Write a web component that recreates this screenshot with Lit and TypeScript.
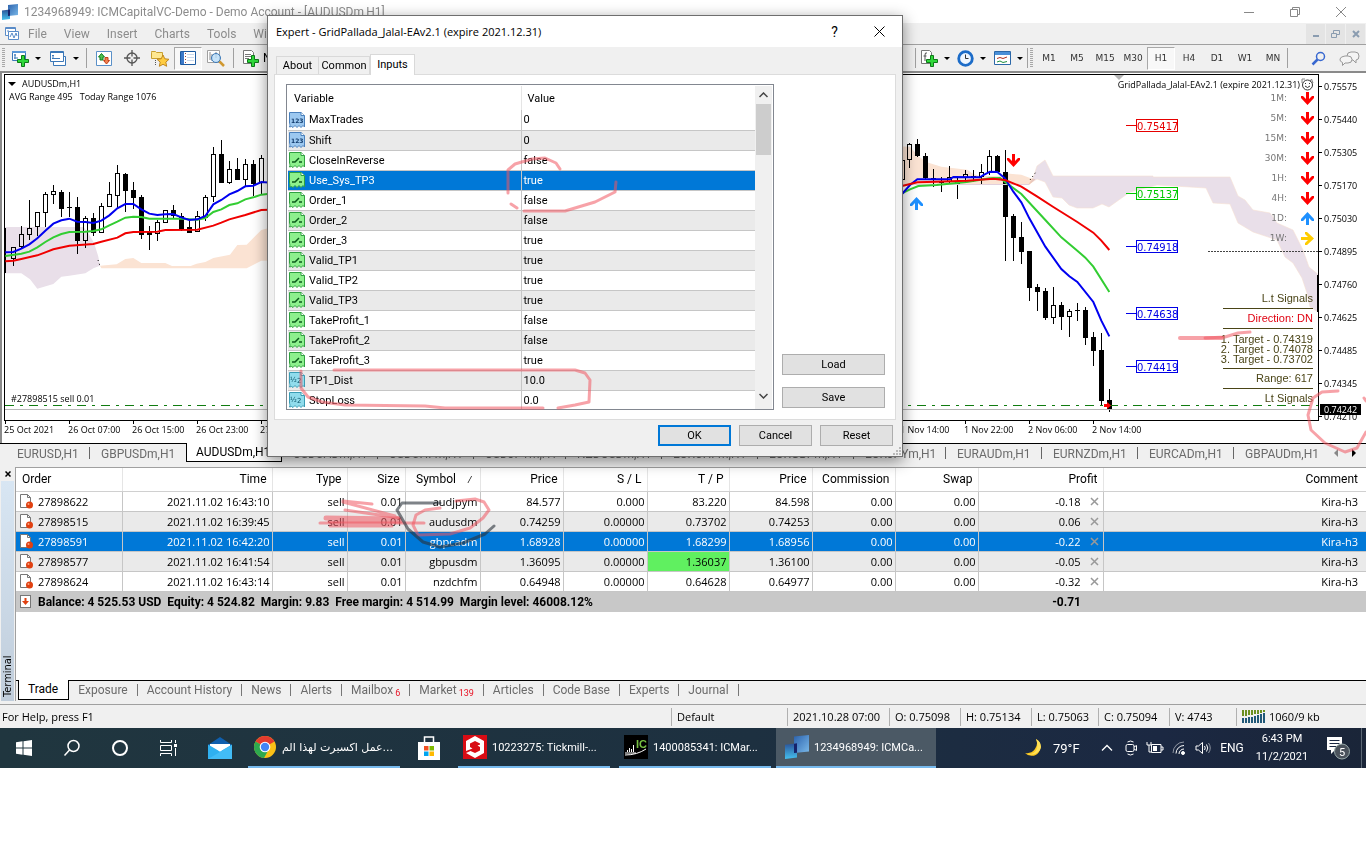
import { LitElement, html, svg, css } from "lit";
import { customElement, state } from "lit/decorators.js";
import { classMap } from "lit/directives/class-map.js";

const reset = css`
  * { box-sizing: border-box; }
  button { font: inherit; color: inherit; background: none; border: 0; padding: 0; margin: 0; border-radius: 0; }
  ul { list-style: none; margin: 0; padding: 0; }
  svg { display: block; flex: none; }
`;

const plus = (x: number, y: number) => svg`
  <path d="M${x + 4} ${y}h3v4h4v3h-4v4h-3v-4h-4v-3h4z" fill="#2fd83a" stroke="#0d7a18" />`;

const logo = (size: number) => html`
  <svg width=${size} height=${size} viewBox="0 0 16 16">
    <defs>
      <linearGradient id="lg1" x1="0" y1="0" x2="0" y2="1"><stop offset="0" stop-color="#2a5298" /><stop offset="1" stop-color="#45c0ee" /></linearGradient>
      <linearGradient id="lg2" x1="0" y1="0" x2="1" y2="1"><stop offset="0" stop-color="#2b62ad" /><stop offset="1" stop-color="#7ab8e8" /></linearGradient>
    </defs>
    <path d="M0 6.500l8-1v9.500l-8 1z" fill="url(#lg1)" />
    <path d="M6 1l10-1v11l-10 1z" fill="url(#lg2)" />
    <path d="M6 5.800l2-.3v6.300l-2 .2z" fill="#16226a" />
  </svg>`;

/* ------------------------------------------------------------------ chart */

type Candle = [x: number, high: number, low: number, top: number, bottom: number, solid: 0 | 1];

const LEFT: Candle[] = [
  [40, 412, 468, 412, 448, 0], [64, 348, 415, 373, 412, 0], [88, 270, 390, 353, 375, 0],
  [112, 307, 378, 307, 350, 0], [136, 247, 350, 253, 308, 0], [160, 225, 282, 243, 255, 0],
  [184, 240, 320, 246, 296, 1], [208, 247, 320, 290, 293, 1], [232, 262, 432, 291, 392, 1],
  [256, 318, 413, 324, 392, 0], [280, 310, 377, 324, 369, 1], [304, 280, 370, 289, 368, 0],
  [328, 215, 292, 252, 290, 0], [352, 165, 295, 189, 257, 0], [376, 190, 306, 192, 242, 1],
  [400, 216, 297, 240, 264, 1], [424, 255, 387, 261, 375, 1], [448, 348, 420, 364, 376, 1],
  [472, 330, 393, 337, 371, 0], [496, 300, 340, 301, 338, 0], [520, 285, 325, 300, 318, 1],
  [544, 310, 362, 318, 360, 1], [568, 330, 369, 351, 369, 1], [592, 303, 366, 318, 365, 0],
  [616, 255, 332, 262, 325, 0], [640, 111, 275, 132, 262, 0], [664, 90, 219, 132, 219, 1],
  [688, 153, 221, 178, 218, 0], [712, 144, 210, 177, 210, 1], [736, 147, 230, 163, 209, 0],
  [760, 150, 258, 162, 222, 1], [784, 135, 252, 145, 220, 0],
];
const RIGHT: Candle[] = [
  [36, 265, 330, 270, 330, 0], [58, 220, 293, 223, 271, 0], [82, 207, 262, 222, 258, 1],
  [106, 250, 330, 258, 325, 1], [130, 297, 350, 325, 331, 1], [154, 322, 365, 333, 338, 1],
  [178, 288, 345, 321, 335, 0], [202, 317, 386, 336, 342, 1], [226, 300, 335, 312, 325, 0],
  [250, 300, 335, 318, 323, 1], [274, 282, 346, 306, 322, 0], [298, 240, 316, 259, 308, 0],
  [322, 255, 310, 258, 306, 1], [346, 240, 573, 306, 440, 1], [370, 433, 573, 437, 503, 1],
  [394, 456, 581, 501, 545, 1], [418, 543, 692, 543, 654, 1], [442, 643, 722, 651, 665, 1],
  [466, 655, 749, 662, 744, 1], [490, 652, 761, 706, 743, 0], [514, 696, 780, 705, 741, 1],
  [538, 716, 800, 723, 741, 0], [562, 699, 752, 720, 724, 1], [586, 711, 824, 720, 803, 1],
  [610, 786, 887, 801, 843, 1], [634, 789, 1004, 840, 992, 1], [658, 957, 1025, 990, 1020, 1],
];

const candles = (list: Candle[], dx: number, dy: number) => list.map(([cx, h, l, t, b, solid]) => {
  const x = Math.round(dx + cx / 3 - 0.4);
  const y = (v: number) => Math.round(dy + v / 3);
  const [yh, yl, yt, yb] = [y(h), y(l), y(t), y(b)];
  return svg`<path d="M${x + 0.5} ${yh}V${yl}" stroke="#000" />
    <rect x=${x - 1.5} y=${yt + 0.5} width="4" height=${Math.max(yb - yt - 1, 0.01)} fill=${solid ? "#000" : "#fff"} stroke="#000" />`;
});

const MARKS = [
  { y: 125, text: "0.75417", color: "#e60000" },
  { y: 193, text: "0.75137", color: "#00c800" },
  { y: 246, text: "0.74918", color: "#0000e6" },
  { y: 313, text: "0.74638", color: "#0000e6" },
  { y: 366, text: "0.74419", color: "#0000e6" },
];
const PRICES = ["0.75575", "0.75440", "0.75305", "0.75170", "0.75030", "0.74895", "0.74760", "0.74625", "0.74485", "0.74345", "0.74210"];
const TIMES = ["25 Oct 2021", "26 Oct 07:00", "26 Oct 15:00", "26 Oct 23:00", "27 Oct 07:00", "27 Oct 15:00", "27 Oct 23:00",
  "28 Oct 07:00", "28 Oct 15:00", "28 Oct 23:00", "29 Oct 07:00", "29 Oct 15:00", "29 Oct 23:00", "1 Nov 06:00", "1 Nov 14:00",
  "1 Nov 22:00", "2 Nov 06:00", "2 Nov 14:00"];
const FRAMES: [string, string][] = [["1M:", "down"], ["5M:", "down"], ["15M:", "down"], ["30M:", "down"], ["1H:", "down"], ["4H:", "down"], ["1D:", "up"], ["1W:", "right"]];

const ARROW = "M5 0h3v7l3-3h2v2l-6.500 7L0 6V4h2l3 3z";
const arrow = (dir: string) => html`
  <svg width="13" height="13" viewBox="0 0 13 13">
    <path d=${ARROW} fill=${dir === "down" ? "#f00" : dir === "up" ? "#1e90ff" : "#ffcc00"}
      transform=${dir === "down" ? "" : dir === "up" ? "rotate(180 6.5 6.5)" : "rotate(-90 6.5 6.5)"} />
  </svg>`;

@customElement("price-chart")
class PriceChart extends LitElement {
  static styles = [reset, css`
    :host { display: block; background: #fff; border-top: 2px solid #8a8a8a; border-left: 2px solid #8a8a8a; padding: 1px 0 0 2px; font: 9px "Open Sans", sans-serif; color: #000; }
    .row { display: flex; align-items: flex-start; }
    .plot { position: relative; flex: 1; min-width: 0; height: 347px; border: 1px solid #000; overflow: hidden; }
    .plot > svg { position: absolute; left: -5px; top: -75px; }
    .caption { position: absolute; left: 3px; top: 2px; line-height: 13px; }
    .caption p { margin: 0; display: flex; align-items: center; gap: 6px; white-space: pre; }
    .caption .name { padding-left: 1px; }
    .side { position: absolute; right: 4px; top: 3px; display: flex; flex-direction: column; align-items: flex-end; }
    .expert { display: flex; align-items: center; gap: 1px; line-height: 13px; white-space: nowrap; }
    .frames { font: 9px/20px "DejaVu Sans", sans-serif; color: #777; margin-top: -3px; }
    .frames li { display: flex; align-items: center; justify-content: flex-end; gap: 14px; height: 20px; }
    .signals { margin-top: 41px; margin-right: 1px; width: 90px; font: 11px/19px "Liberation Sans", sans-serif; color: #4a4416; text-align: right; display: flex; flex-direction: column; }
    .signals > div { height: 20px; border-bottom: 1px solid #4a4416; white-space: nowrap; }
    .signals .dir { color: #e00010; }
    .signals .targets { height: 40px; padding-top: 5px; line-height: 10px; display: flex; flex-direction: column; align-items: flex-end; }
    .signals .last { border-bottom: 0; }
    .axis { position: relative; width: 47px; height: 347px; }
    .axis ul { margin-top: -4px; }
    .axis li { height: 33px; line-height: 33px; display: flex; align-items: center; gap: 2px; }
    .axis li::before { content: ""; width: 3px; height: 1px; background: #000; }
    .axis .now { position: absolute; top: 330px; left: 1px; width: 41px; height: 11px; line-height: 11px; padding-left: 4px; background: #000; color: #fff; }
    .times { display: flex; height: 22px; overflow: hidden; }
    .times li { flex: none; width: 64px; line-height: 18px; position: relative; white-space: nowrap; }
    .times li::before { content: ""; position: absolute; left: 1px; top: 0; width: 1px; height: 3px; background: #000; }
  `];

  render() {
    return html`
      <div class="row">
        <div class="plot">
          <svg width="1400" height="425" viewBox="0 0 1400 425">
            <rect x="4" y="228" width="2" height="45" fill="#000" />
            <g>${candles(LEFT, 0, 110)}${candles(RIGHT, 890, 70)}</g>
            <g transform="translate(0 110) scale(.33333)" style="mix-blend-mode:multiply">
              <path fill="#e9dfe9" d="M14 351H250L262 365L282 398L295 440L300 467L280 475L256 490L208 497L184 500L160 522L112 536L90 508L64 490H14z" />
              <path fill="#fbe3d3" d="M300 467L350 463L376 447L400 444L424 459H496L516 468H572L590 461L616 456L640 444L690 434L712 405L740 404L784 360L900 330V450L784 452L740 475H304z" />
            </g>
            <g transform="translate(890 70) scale(.33333)" style="mix-blend-mode:multiply">
              <path fill="#fbe3d3" d="M0 228L60 230L82 255L106 275L154 290L232 299L250 312L270 318L330 318L345 310L394 314L418 323L436 328L418 345H0z" />
            </g>
            <path style="mix-blend-mode:multiply" fill="#e9dfe9" stroke="#f6e0d4" stroke-width=".6" d="M1029 184L1033 178L1037 166L1045 160L1053 176H1153V177H1230L1238 196L1245 200L1253 210L1270 213L1277 223L1293 230L1303 250L1309 267L1320 276V313L1310 307L1307 293L1302 278L1293 263L1285 257L1277 240L1253 232L1238 223L1230 204L1213 203L1206 188L1157 185L1130 192L1109 207L1102 204L1093 208H1077L1069 205L1062 198L1053 197L1045 182L1037 179z" />
            <path d="M904 184.500H1029" stroke="#e2d0dc" />
            <g transform="translate(0 110) scale(.33333)" fill="none" stroke-width="6">
              <path stroke="#f00000" d="M16 454L40 452L64 447L112 436L136 427L160 418L208 407L280 402L304 395L352 383L376 370L400 366L472 365L496 360L592 359L640 347L664 338L688 328L736 315L784 300L900 296" />
              <path stroke="#32cd32" d="M16 438L64 431L88 425L112 412L136 396L160 382L184 372L208 366L256 365L280 363L304 358L328 346L352 335L376 323L400 320L424 321L448 326H544L592 329L616 324L640 306L664 298L688 285L712 280L736 268L760 262L784 254L900 240" />
              <path stroke="#0000f0" d="M16 427L40 426L64 416L88 403L112 385L136 362L160 341L184 331L208 326L232 335L256 336L280 339L304 332L328 316L352 295L376 282L400 282L424 298L448 311L472 315L496 313L520 312L544 322L568 330L592 328L616 318L640 283L664 270L688 253L712 243L736 229L760 227L784 216L900 224" />
            </g>
            <g transform="translate(890 70) scale(.33333)" fill="none" stroke-width="6">
              <path stroke="#32cd32" d="M36 370L60 358L85 348L140 345L230 336L300 325L330 324L355 343L394 372L466 450L514 502L562 542L586 563L610 590L658 666" />
              <path stroke="#0000f0" d="M36 372L60 345L82 328H180L190 321L270 322L280 315L300 305L322 306L345 325L370 365L394 397L418 445L466 530L514 597L538 619L562 636L610 696L634 752L658 799" />
              <path stroke="#f00000" d="M36 348L82 337L140 335L230 332L310 326L345 330L370 340L394 350L442 380L490 411L562 456L610 488L634 512L658 540" />
            </g>
            <path d="M1030 180l6-8M98 260l2 6" stroke="#000" stroke-dasharray="1 3" />
            <path d="M5 405.500H1400" stroke="#107c10" stroke-dasharray="9 6 3 6" />
            <path d="M5 409.500H1400" stroke="#b8b8b8" />
            <path d="M1208 251.500H1320" stroke="#444" stroke-dasharray="2 1" />
            <path d="M1114 75h10l-5 5z" fill="#b4b4b4" />
            <path d=${ARROW} transform="translate(1007 154)" fill="#f00" />
            <path d=${ARROW} transform="translate(923 210) rotate(180)" fill="#1e90ff" />
            <path d="M1104 404h3v-2l4 3.500l-4 3.500v-2h-3z" fill="#f00" />
            <path d="M1317.500 275V312" stroke="#000" />
            <text x="11" y="402" font-size="9">#27898515 sell 0.01</text>
            ${MARKS.map((m) => svg`
              <g font-family="DejaVu Sans, sans-serif" font-size="10">
                <path d="M1126 ${m.y + 0.5}h10" stroke=${m.color} />
                <rect x="1136.5" y=${m.y - 5.5} width="41" height="12" fill="none" stroke=${m.color} />
                <text x="1137" y=${m.y + 5} fill=${m.color}>${m.text}</text>
              </g>`)}
          </svg>
          <div class="caption">
            <p><svg width="8" height="4" viewBox="0 0 8 4"><path d="M0 0h8L4 4z" /></svg>AUDUSDm,H1</p>
            <p class="name">AVG Range 495   Today Range 1076</p>
          </div>
          <div class="side">
            <div class="expert">GridPallada_Jalal-EAv2.1 (expire 2021.12.31)
              <svg width="13" height="13" viewBox="0 0 13 13" fill="none" stroke="#333"><path d="M1 5V1h3M9 4l1.500-3l1.500 4" stroke="#888" /><circle cx="6.500" cy="7" r="5" /><path d="M4 8q2.500 3 5 0M4.500 5v1M8.500 5v1" /></svg>
            </div>
            <ul class="frames">${FRAMES.map(([t, d]) => html`<li>${t}${arrow(d)}</li>`)}</ul>
            <div class="signals">
              <div>L.t Signals</div>
              <div class="dir">Direction: DN</div>
              <div class="targets"><span>1. Target - 0.74319</span><span>2. Target - 0.74078</span><span>3. Target - 0.73702</span></div>
              <div>Range: 617</div>
              <div class="last">Lt Signals</div>
            </div>
          </div>
        </div>
        <div class="axis">
          <ul>${PRICES.map((p) => html`<li>${p}</li>`)}</ul>
          <div class="now">0.74242</div>
        </div>
      </div>
      <ul class="times">${TIMES.map((t) => html`<li>${t}</li>`)}</ul>`;
  }
}

/* ----------------------------------------------------------------- dialog */

type Param = [name: string, value: string, kind: "int" | "bool" | "real"];
const PARAMS: Param[] = [
  ["MaxTrades", "0", "int"], ["Shift", "0", "int"], ["CloseInReverse", "false", "bool"], ["Use_Sys_TP3", "true", "bool"],
  ["Order_1", "false", "bool"], ["Order_2", "false", "bool"], ["Order_3", "true", "bool"], ["Valid_TP1", "true", "bool"],
  ["Valid_TP2", "true", "bool"], ["Valid_TP3", "true", "bool"], ["TakeProfit_1", "false", "bool"], ["TakeProfit_2", "false", "bool"],
  ["TakeProfit_3", "true", "bool"], ["TP1_Dist", "10.0", "real"], ["StopLoss", "0.0", "real"],
];
const KIND = {
  int: { fill: "#9cc8f0", line: "#4a80bc" },
  bool: { fill: "#8df08d", line: "#30a040" },
  real: { fill: "#90dcec", line: "#3a9cb4" },
};
const kindIcon = (k: Param[2]) => html`
  <svg width="16" height="16" viewBox="0 0 16 16">
    <path d="M.5 .5h11.500l3.500 3v11.500l-1.500-1.500l-2 2l-2-2l-2 2l-2-2l-2 2l-1.500-1l-2 .5c1-2 0-3 0-4z" fill=${KIND[k].fill} stroke=${KIND[k].line} />
    <path d="M12 .5v3h3.500" fill="#fff" stroke=${KIND[k].line} />
    ${k === "int" ? svg`<text x="2" y="11" font-family="DejaVu Sans" font-weight="bold" font-size="6" fill="#103a6c">123</text>`
      : k === "bool" ? svg`<path d="M3 10h3l4-4M10 10h3" stroke="#0c5a1c" stroke-width="1.500" fill="none" />`
      : svg`<text x="1" y="10" font-family="DejaVu Sans" font-size="7" fill="#0c5468">½</text><text x="8" y="11" font-family="DejaVu Sans" font-size="7" fill="#0c5468">2</text>`}
  </svg>`;

@customElement("expert-dialog")
class ExpertDialog extends LitElement {
  @state() private selected = 3;

  static styles = [reset, css`
    :host { display: flex; flex-direction: column; background: #f0f0f0; border: 1px solid #6e6e6e; box-shadow: 0 4px 14px rgba(0, 0, 0, .45); font: 11px "Roboto", sans-serif; color: #000; }
    header { display: flex; align-items: center; height: 31px; background: #fff; padding-left: 8px; }
    h1 { flex: 1; margin: 0; font: 11px "Open Sans", sans-serif; }
    header button { width: 45px; height: 31px; display: flex; align-items: center; justify-content: center; font-size: 14px; }
    .tabs { display: flex; align-items: flex-end; height: 27px; padding-left: 8px; }
    .tabs button { height: 18px; border: 1px solid #d9d9d9; border-bottom: 0; width: 52px; }
    .tabs .first { width: 42px; border-right: 0; }
    .tabs .on { height: 21px; width: 45px; background: #fff; margin-bottom: -1px; z-index: 1; padding-bottom: 2px; }
    .page { display: flex; gap: 8px; margin: 0 6px; padding: 9px 10px 9px 11px; border: 1px solid #dcdcdc; background: #fff; height: 346px; }
    .list { display: flex; flex: 1; border: 1px solid #828790; padding: 1px 1px 0; overflow: hidden; }
    table { flex: 1; border-collapse: collapse; table-layout: fixed; height: max-content; }
    th { height: 24px; font-weight: 400; text-align: left; padding: 0 6px; border-right: 1px solid #e5e5e5; }
    th:last-child { border-right: 0; }
    td { height: 20px; padding: 0; border-bottom: 1px solid #c6c6c6; }
    td:first-child { border-right: 1px solid #c6c6c6; }
    td + td { padding-left: 2px; }
    tbody tr:nth-child(even) { background: #eaeaea; }
    tbody tr.sel { background: #0078d7; color: #fff; }
    .name { display: flex; align-items: center; gap: 4px; height: 19px; padding-left: 1px; }
    .c1 { width: 233px; }
    .scroll { width: 17px; background: #f0f0f0; display: flex; flex-direction: column; align-items: center; justify-content: space-between; padding: 0 0 4px; }
    .scroll .thumb { width: 15px; height: 51px; background: #cdcdcd; margin-bottom: auto; }
    .scroll button { height: 18px; display: flex; align-items: center; }
    .side { display: flex; flex-direction: column; justify-content: flex-end; gap: 12px; width: 103px; padding-bottom: 2px; }
    .side .push, footer button { height: 21px; border: 1px solid #adadad; background: #e1e1e1; }
    footer { display: flex; justify-content: flex-end; gap: 8px; padding: 5px 9px 10px; position: relative; }
    footer button { width: 73px; }
    footer .ok { border: 2px solid #0078d7; }
    footer svg { position: absolute; right: 1px; bottom: 1px; }
  `];

  render() {
    return html`
      <header>
        <h1>Expert - GridPallada_Jalal-EAv2.1 (expire 2021.12.31)</h1>
        <button aria-label="Help">?</button>
        <button aria-label="Close"><svg width="11" height="11" viewBox="0 0 11 11"><path d="M.5 .5l10 10M10.500 .5l-10 10" stroke="#000" /></svg></button>
      </header>
      <div class="tabs"><button class="first">About</button><button>Common</button><button class="on">Inputs</button></div>
      <div class="page">
        <div class="list">
          <table>
            <colgroup><col class="c1" /><col /></colgroup>
            <thead><tr><th>Variable</th><th>Value</th></tr></thead>
            <tbody>
              ${PARAMS.map(([n, v, k], i) => html`
                <tr class=${classMap({ sel: i === this.selected })} @click=${() => (this.selected = i)}>
                  <td><div class="name">${kindIcon(k)}${n}</div></td><td>${v}</td>
                </tr>`)}
            </tbody>
          </table>
          <div class="scroll">
            <button aria-label="Scroll up"><svg width="9" height="6" viewBox="0 0 9 6"><path d="M.5 5l4-4l4 4" fill="none" stroke="#444" stroke-width="1.500" /></svg></button>
            <div class="thumb"></div>
            <button aria-label="Scroll down"><svg width="9" height="6" viewBox="0 0 9 6"><path d="M.5 1l4 4l4-4" fill="none" stroke="#444" stroke-width="1.500" /></svg></button>
          </div>
        </div>
        <div class="side"><button class="push">Load</button><button class="push">Save</button></div>
      </div>
      <footer>
        <button class="ok">OK</button><button>Cancel</button><button>Reset</button>
        <svg width="8" height="8" viewBox="0 0 8 8" fill="#b8b8b8"><path d="M6 0h2v2h-2zM3 3h2v2h-2zM6 3h2v2h-2zM0 6h2v2h-2zM3 6h2v2h-2zM6 6h2v2h-2z" /></svg>
      </footer>`;
  }
}

/* --------------------------------------------------------------- terminal */

const HEADS = ["Order", "Time", "Type", "Size", "Symbol", "Price", "S / L", "T / P", "Price", "Commission", "Swap", "Profit", "Comment"];
const ORDERS = [
  ["27898622", "2021.11.02 16:43:10", "sell", "0.01", "audjpym", "84.577", "0.000", "83.220", "84.598", "0.00", "0.00", "-0.18", "Kira-h3"],
  ["27898515", "2021.11.02 16:39:45", "sell", "0.01", "audusdm", "0.74259", "0.00000", "0.73702", "0.74253", "0.00", "0.00", "0.06", "Kira-h3"],
  ["27898591", "2021.11.02 16:42:20", "sell", "0.01", "gbpcadm", "1.68928", "0.00000", "1.68299", "1.68956", "0.00", "0.00", "-0.22", "Kira-h3"],
  ["27898577", "2021.11.02 16:41:54", "sell", "0.01", "gbpusdm", "1.36095", "0.00000", "1.36037", "1.36100", "0.00", "0.00", "-0.05", "Kira-h3"],
  ["27898624", "2021.11.02 16:43:14", "sell", "0.01", "nzdchfm", "0.64948", "0.00000", "0.64628", "0.64977", "0.00", "0.00", "-0.32", "Kira-h3"],
];
const TABS: [string, string?][] = [["Trade"], ["Exposure"], ["Account History"], ["News"], ["Alerts"], ["Mailbox", "6"], ["Market", "139"], ["Articles"], ["Code Base"], ["Experts"], ["Journal"]];

@customElement("trade-terminal")
class TradeTerminal extends LitElement {
  static styles = [reset, css`
    :host { display: grid; grid-template-columns: 15px minmax(0, 1fr); background: #f0f0f0; padding: 4px 0 3px; font: 11px "Open Sans", sans-serif; color: #000; }
    .rail { display: flex; flex-direction: column; align-items: center; }
    .rail button { height: 14px; display: flex; align-items: center; }
    .band { flex: 1; align-self: stretch; margin: 0 1px; background: linear-gradient(0deg, #d8e6f3, #c0cddb); display: flex; align-items: center; justify-content: flex-start; writing-mode: vertical-rl; transform: rotate(180deg); font: 11px/13px "DejaVu Sans Condensed", sans-serif; padding-top: 4px; }
    .panel { border: 1px solid #a0a0a0; border-right: 0; border-bottom: 0; background: #fff; display: flex; flex-direction: column; min-height: 234px; }
    table { width: 100%; border-collapse: collapse; table-layout: fixed; }
    .c0 { width: 106px; } .c1 { width: 150px; } .c2 { width: 75px; } .c3 { width: 58px; } .c4 { width: 75px; } .c5 { width: 83px; }
    .c6 { width: 84px; } .c7 { width: 82px; } .c8, .c9, .c10 { width: 83px; } .c11 { width: 125px; }
    th { height: 23px; font: 12px "Roboto", sans-serif; text-align: right; padding: 0 5px 0 0; border-right: 1px solid #e5e5e5; border-bottom: 1px solid #d0d0d0; white-space: nowrap; }
    th:first-child { text-align: left; padding-left: 6px; }
    th:last-child, td:last-child { padding-right: 8px; border-right: 0; }
    th.sym i { margin: 0 3px 0 12px; font-size: 9px; }
    td { height: 20px; padding: 0 2px 0 0; text-align: right; border-right: 1px solid #c6c6c6; border-bottom: 1px solid #c6c6c6; white-space: nowrap; }
    .id, .profit { display: flex; align-items: center; height: 19px; }
    .id { gap: 4px; padding-left: 3px; }
    .profit { justify-content: flex-end; gap: 9px; padding-right: 2px; }
    tbody tr:nth-child(even) { background: #eaeaea; }
    tbody tr.sel { background: #0078d7; color: #fff; }
    .near { background: #60f060; background-clip: padding-box; }
    .total td { height: 20px; background: #c8c8c8; border: 0; font: 700 12px "Roboto", sans-serif; }
    .total .id { gap: 6px; height: 20px; white-space: pre; }
    .total .sum { padding-right: 22px; }
    .tabs { margin-top: auto; display: flex; height: 21px; border-top: 1px solid #000; background: #f0f0f0; font: 12px "Roboto", sans-serif; color: #6b6b6b; padding-left: 2px; }
    .tabs button { padding: 0 10px 3px 9px; position: relative; display: flex; align-items: center; gap: 2px; }
    .tabs button::after { content: ""; position: absolute; right: 0; top: 3px; height: 12px; width: 1px; background: #777; }
    .tabs .on { background: #fff; color: #000; border: 1px solid #000; border-top: 0; margin-top: -1px; padding-bottom: 1px; height: 20px; }
    .tabs .on::after { display: none; }
    .tabs sub { color: #e81123; font: 9px/9px "Roboto", sans-serif; align-self: flex-end; }
  `];

  render() {
    return html`
      <div class="rail">
        <button aria-label="Close terminal"><svg width="6" height="6" viewBox="0 0 6 6"><path d="M.5 .5l5 5M5.500 .5l-5 5" stroke="#000" stroke-width="1.500" /></svg></button>
        <div class="band">Terminal</div>
      </div>
      <div class="panel">
        <table>
          <colgroup>${HEADS.map((_, i) => html`<col class="c${i}" />`)}</colgroup>
          <thead><tr>${HEADS.map((h) => (h === "Symbol" ? html`<th class="sym">${h}<i>/</i></th>` : html`<th>${h}</th>`))}</tr></thead>
          <tbody>
            ${ORDERS.map((o) => html`
              <tr class=${classMap({ sel: o[0] === "27898591" })}>
                ${o.map((v, i) => i === 0
                  ? html`<td><div class="id">
                      <svg width="15" height="16" viewBox="0 0 15 16"><path d="M1.500 1.500h7l3 3v10h-10z" fill="#fff" stroke="#777" /><path d="M8.500 1.500v3h3" fill="none" stroke="#777" /><circle cx="10.500" cy="12" r="3.500" fill="#e04010" /><circle cx="9.500" cy="11" r="1" fill="#ffa080" /></svg>${v}</div></td>`
                  : i === 11
                    ? html`<td><div class="profit">${v}<svg width="9" height="9" viewBox="0 0 9 9"><path d="M1 1l7 7M8 1l-7 7" stroke="#999" stroke-width="1.500" /></svg></div></td>`
                    : html`<td class=${classMap({ near: i === 7 && o[0] === "27898577" })}>${v}</td>`)}
              </tr>`)}
            <tr class="total">
              <td colspan="11"><div class="id"><svg width="13" height="14" viewBox="0 0 13 14"><rect x="1.500" y=".5" width="10" height="12" fill="#fff" stroke="#777" /><path d="M5.500 3h2v3h2.500l-3.500 4l-3.500-4h2.500z" fill="#e04010" /></svg>Balance: 4 525.53 USD  Equity: 4 524.82  Margin: 9.83  Free margin: 4 514.99  Margin level: 46008.12%</div></td>
              <td class="sum">-0.71</td><td></td>
            </tr>
          </tbody>
        </table>
        <nav class="tabs">${TABS.map(([t, n], i) => html`<button class=${classMap({ on: i === 0 })}>${t}${n ? html`<sub>${n}</sub>` : ""}</button>`)}</nav>
      </div>`;
  }
}

/* ---------------------------------------------------------------- taskbar */

@customElement("task-bar")
class TaskBar extends LitElement {
  static styles = [reset, css`
    :host { display: flex; height: 40px; background: linear-gradient(90deg, #20363f, #1d3040 55%, #1b2842 85%, #1a2538); color: #fff; font: 11px "Roboto", sans-serif; }
    button { height: 40px; display: flex; align-items: center; justify-content: center; flex: none; }
    .sq { width: 48px; }
    .mail { width: 56px; }
    .app { width: 152px; justify-content: flex-start; gap: 5px; padding-left: 5px; border-bottom: 2px solid #76b9ed; white-space: nowrap; }
    .app + .app { margin-left: 9px; }
    .app + .on { width: 160px; margin-left: 5px; padding-left: 9px; background: #4b5965; }
    .ar { font: 11px "DejaVu Sans", sans-serif; }
    .shop { width: 58px; }
    .tray { margin-left: auto; display: flex; }
    .weather { gap: 9px; width: 71px; justify-content: flex-start; font-size: 13px; }
    .ic { width: 24px; }
    .lang { width: 34px; font-size: 12px; }
    .clock { width: 66px; flex-direction: column; line-height: 18px; font-size: 11px; }
    .note { width: 47px; border-right: 1px solid #5b6774; margin-right: 4px; }
  `];

  render() {
    return html`
      <button class="sq" aria-label="Start"><svg width="16" height="16" viewBox="0 0 16 16" fill="#fff"><path d="M0 2.200l6.500-.9v6.200h-6.500zM7.500 1.200l8.500-1.200v7.500h-8.500zM0 8.500h6.500v6.200l-6.500-.9zM7.500 8.500h8.500v7.500l-8.500-1.200z" /></svg></button>
      <button class="sq" aria-label="Search"><svg width="18" height="18" viewBox="0 0 18 18" fill="none" stroke="#fff" stroke-width="1.500"><circle cx="10.500" cy="7" r="5.500" /><path d="M6.500 11l-5 5.500" /></svg></button>
      <button class="sq" aria-label="Cortana"><svg width="18" height="18" viewBox="0 0 18 18" fill="none" stroke="#fff" stroke-width="2"><circle cx="9" cy="9" r="7" /></svg></button>
      <button class="sq" aria-label="Task view"><svg width="17" height="16" viewBox="0 0 17 16" fill="none" stroke="#fff"><path d="M.5 0v2.500h11v-2.500M.5 5.500h11v5h-11zM.5 16v-2.500h11v2.500M15.500 0v3M15.500 8v8" /><path d="M14 4h3v3h-3z" fill="#fff" stroke="none" /></svg></button>
      <button class="mail" aria-label="Mail"><svg width="24" height="22" viewBox="0 0 24 22"><path d="M0 8L12 0l12 8v14h-24z" fill="#0f5fae" /><path d="M2 7h20v9h-20z" fill="#fff" /><path d="M0 7.500l12 7l12-7v14.500h-24z" fill="#2fb0f0" /><path d="M0 22l24-14v14z" fill="#42bcf6" /><path d="M2 7h20l-10 7.500z" fill="#fff" /></svg></button>
      <button class="app"><svg width="24" height="24" viewBox="0 0 24 24"><circle cx="12" cy="12" r="11" fill="#fbc116" /><path d="M12 12L2.500 6.500A11 11 0 0 1 21.500 6.500z" fill="#e33b2e" /><path d="M12 12L2.500 6.500A11 11 0 0 0 11 23l5-9z" fill="#2da94f" /><circle cx="12" cy="12" r="5.300" fill="#fff" /><circle cx="12" cy="12" r="4.200" fill="#4285f4" /></svg><span class="ar" dir="ltr">عمل اكسبرت لهذا الم...</span></button>
      <button class="shop" aria-label="Store"><svg width="24" height="24" viewBox="0 0 24 24"><path d="M7.500 7V1h9v6" fill="none" stroke="#fff" stroke-width="1.500" /><path d="M1 6h22v18h-22z" fill="#fff" /><path d="M7 10h4.500v4.500h-4.500z" fill="#f25022" /><path d="M12.500 10h4.500v4.500h-4.500z" fill="#7fba00" /><path d="M7 15.500h4.500v4.500h-4.500z" fill="#00a4ef" /><path d="M12.500 15.500h4.500v4.500h-4.500z" fill="#ffb900" /></svg></button>
      <button class="app"><svg width="24" height="24" viewBox="0 0 24 24"><path d="M0 0h24v24h-24z" fill="#d80c14" /><path d="M12 1l9 5v5l-4-1v-1.500l-5-2.500l-5 2.500v3.500l2.500 1.500l-6.500 2.500v-10zM12 23l-9-5l4.500-2l4.500 2l5-2.500v-3.500l-2.500-1.500l6.500-2.500v10z" fill="#fff" /></svg>10223275: Tickmill-...</button>
      <button class="app"><svg width="24" height="24" viewBox="0 0 24 24"><path d="M0 0h24v24h-24z" fill="#000" /><path d="M1 18h11M3.500 17v-2M5.500 17v-4M7.500 17v-3M9.500 17v-7M1 20q12 0 21-6" stroke="#fff" fill="none" /><text x="12" y="13" font-size="11" font-weight="700" font-family="Liberation Sans" fill="#76c043">IC</text></svg>1400085341: ICMar...</button>
      <button class="app on">${logo(24)}1234968949: ICMCa...</button>
      <div class="tray">
        <button class="weather"><svg width="20" height="20" viewBox="0 0 20 20"><path d="M12 1a9 9 0 1 1-11 14a10 10 0 0 0 11-14z" fill="#fdc921" /><path d="M12 1a9 9 0 0 1 5 8c-1 6-8 9-13 7c7 1 12-6 8-15z" fill="#ffe15a" /></svg>79°F</button>
        <button class="ic" aria-label="Show hidden icons"><svg width="12" height="8" viewBox="0 0 12 8" fill="none" stroke="#fff" stroke-width="1.300"><path d="M1 6.500L6 1.500l5 5" /></svg></button>
        <button class="ic" aria-label="Meet Now"><svg width="13" height="16" viewBox="0 0 13 16" fill="none" stroke="#fff"><rect x="1" y="4.500" width="8" height="7" rx="1.500" /><path d="M9 7l2.500-1.500v5L9 9M2.500 2q3-2 6 0M2.500 14q3 2 6 0" /></svg></button>
        <button class="ic" aria-label="Battery"><svg width="18" height="14" viewBox="0 0 18 14" fill="none" stroke="#fff"><path d="M5.500 3.500h9.500v8h-9.500zM15 6h2v3h-2M1 1v3h4v-3M3 4v7h2.500" /><path d="M7 5h4v5h-4z" fill="#fff" stroke="none" /></svg></button>
        <button class="ic" aria-label="Network"><svg width="14" height="14" viewBox="0 0 14 14" fill="none" stroke="#fff"><path d="M1 12A11 11 0 0 1 12 1" opacity=".5" /><path d="M4 12.500a8 8 0 0 1 8-8M7 13a5 5 0 0 1 5-5" /><circle cx="11" cy="12" r="1.500" fill="#fff" /></svg></button>
        <button class="ic" aria-label="Volume"><svg width="17" height="14" viewBox="0 0 17 14" fill="none" stroke="#fff"><path d="M1 5h2.500l4-3.500v11l-4-3.500h-2.500z" /><path d="M9.500 5q1.500 2 0 4M11.500 3.500q2.500 3.500 0 7" /><path d="M13.500 2q3.500 5 0 10" opacity=".5" /></svg></button>
        <button class="lang">ENG</button>
        <button class="clock"><span>6:43 PM</span><span>11/2/2021</span></button>
        <button class="note" aria-label="Notifications"><svg width="26" height="24" viewBox="0 0 26 24"><path d="M2 1h15v13h-7l-4 4v-4h-4z" fill="#fff" /><path d="M4.500 4.500h10M4.500 7.500h10M4.500 10.500h10" stroke="#1b2842" /><circle cx="17" cy="15.500" r="7.500" fill="#4a525c" stroke="#9aa" /><text x="14" y="20" font-size="11" font-family="Roboto" fill="#fff">5</text></svg></button>
      </div>`;
  }
}

/* -------------------------------------------------------------------- app */

const SYMBOLS = ["EURUSD,H1", "GBPUSDm,H1", "AUDUSDm,H1", "USDCADm,H1", "USDCHFm,H1", "USDJPYm,H1", "NZDUSDm,H1", "EURCHFm,H1", "EURGBPm,H1", "EURJPYm,H1", "EURAUDm,H1", "EURNZDm,H1", "EURCADm,H1", "GBPAUDm,H1"];
const PERIODS = ["M1", "M5", "M15", "M30", "H1", "H4", "D1", "W1", "MN"];
const caret = html`<svg width="6" height="3" viewBox="0 0 6 3"><path d="M0 0h6l-3 3z" /></svg>`;

@customElement("app-root")
class AppRoot extends LitElement {
  static styles = [reset, css`
    :host { display: block; position: relative; overflow: hidden; background: #fff; font: 12px "Roboto", sans-serif; color: #000; }
    .title { display: flex; align-items: center; height: 23px; padding-left: 2px; background: #fff; color: #8c8c8c; gap: 6px; }
    .title h1 { flex: 1; margin: 0; font: inherit; }
    .win { display: flex; margin-right: 2px; }
    .win button { width: 46px; height: 22px; display: flex; align-items: center; justify-content: center; }
    .menu { display: flex; align-items: center; height: 21px; background: #f0f0f0; color: #8c8c8c; padding-left: 5px; }
    .menu nav { display: flex; flex: 1; gap: 17px; padding-left: 8px; }
    .mdi { display: flex; }
    .mdi button { width: 19px; height: 20px; margin-right: 1px; background: #e4e4e4; display: flex; align-items: center; justify-content: center; }
    .tools { display: flex; align-items: center; height: 27px; background: #f0f0f0; border-top: 1px solid #a0a0a0; font: 9px "DejaVu Sans", sans-serif; color: #333; }
    .group { display: flex; align-items: center; }
    .group.end { margin-left: auto; }
    .group button { display: flex; align-items: center; justify-content: center; height: 23px; }
    .grip { width: 3px; height: 20px; margin: 0 2px; background: repeating-linear-gradient(#a8a8a8 0 1px, #f0f0f0 1px 2px); }
    .sep { width: 1px; height: 20px; background: #a0a0a0; }
    .start .sep { margin: 0 3px; }
    .drop { width: 37px; gap: 6px; }
    .start .drop { width: 38px; }
    .tool, .period { width: 28px; }
    .down { border: 1px solid #a8a8a8; border-right-color: #fff; border-bottom-color: #fff; background: #f8f8f8; }
    .group .order { gap: 4px; padding: 0 5px; font: 12px "Roboto", sans-serif; color: #000; }
    .ends { width: 78px; display: flex; justify-content: space-between; padding: 0 6px 0 23px; }
    .sheets { display: flex; height: 20px; background: #f0f0f0; border-top: 1px solid #000; color: #6b6b6b; padding-left: 6px; position: relative; }
    .sheets button { width: 96px; height: 19px; padding: 0 11px; text-align: left; position: relative; white-space: nowrap; flex: none; }
    .sheets .short { width: 84px; }
    .sheets .mid { width: 92px; }
    .sheets button::after { content: ""; position: absolute; right: 0; top: 3px; width: 1px; height: 12px; background: #666; }
    .sheets .on { background: #fff; border: 1px solid #000; border-top: 0; color: #000; margin-top: -1px; padding: 0 9px; height: 19px; }
    .sheets .on::after, .sheets button:nth-of-type(14)::after, .sheets button:nth-of-type(2)::after { display: none; }
    .sheets .scroll { position: absolute; right: 10px; top: 5px; background: #f0f0f0; }
    .status { display: flex; align-items: center; height: 24px; background: #f0f0f0; border-top: 1px solid #a0a0a0; font: 11px "Open Sans", sans-serif; }
    .status div { border-left: 1px solid #b0b0b0; height: 18px; padding-left: 5px; display: flex; align-items: center; gap: 3px; white-space: nowrap; }
    .status .help { flex: 1; border: 0; padding-left: 2px; }
    .w1 { width: 116px; } .w2 { width: 102px; } .w3 { width: 71px; } .w4 { width: 67px; } .w5 { width: 130px; }
    .dialog { position: absolute; left: 267px; top: 15px; width: 636px; }
    .ink { position: absolute; left: 0; top: 0; pointer-events: none; }
  `];

  render() {
    return html`
      <header class="title">
        ${logo(16)}<h1>1234968949: ICMCapitalVC-Demo - Demo Account - [AUDUSDm,H1]</h1>
        <div class="win">
          <button aria-label="Minimize"><svg width="10" height="10" viewBox="0 0 10 10"><path d="M0 5.500h10" stroke="#888" /></svg></button>
          <button aria-label="Restore"><svg width="10" height="10" viewBox="0 0 10 10" fill="none" stroke="#888"><path d="M.5 2.500h7v7h-7zM2.500 2.500v-2h7v7h-2" /></svg></button>
          <button aria-label="Close"><svg width="10" height="10" viewBox="0 0 10 10"><path d="M0 0l10 10M10 0L0 10" stroke="#888" /></svg></button>
        </div>
      </header>
      <div class="menu">
        <svg width="15" height="15" viewBox="0 0 15 15" fill="#fff" stroke="#5a8cc8"><path d="M.5 1.500h10v8h-10z" /><path d="M.5 2.500h10" /><path d="M3.500 5.500h10v8h-10z" /><path d="M5 11l2-4l2 5l2-5l1 3M2 5h2" fill="none" /></svg>
        <nav>${["File", "View", "Insert", "Charts", "Tools", "Window"].map((m) => html`<button>${m}</button>`)}</nav>
        <div class="mdi">
          <button aria-label="Minimize chart"><svg width="8" height="8" viewBox="0 0 8 8"><path d="M1 6h6" stroke="#8a9cb0" stroke-width="2" /></svg></button>
          <button aria-label="Restore chart"><svg width="9" height="8" viewBox="0 0 9 8" fill="none" stroke="#8a9cb0"><path d="M.5 3.500h5v4h-5zM2.500 3v-2.500h6v4h-3" /></svg></button>
          <button aria-label="Close chart"><svg width="8" height="8" viewBox="0 0 8 8"><path d="M1 1l6 6M7 1l-6 6" stroke="#8a9cb0" stroke-width="2" /></svg></button>
        </div>
      </div>
      <div class="tools">
        <div class="group start">
          <span class="grip"></span>
          <button class="drop" aria-label="New chart"><svg width="18" height="17" viewBox="0 0 18 17"><path d="M1.500 1.500h13v9h-13z" fill="#fff" stroke="#3b78b8" /><path d="M1 1h14v2h-14z" fill="#5a98d8" /><path d="M4 4v5M3 5h2M3 8h4" stroke="#3b78b8" />${plus(6.5, 5.5)}</svg>${caret}</button>
          <button class="drop" aria-label="Profiles"><svg width="18" height="17" viewBox="0 0 18 17" fill="#fff" stroke="#3b78b8"><path d="M4.500 6.500h12v9h-12z" /><path d="M1.500 1.500h13v10h-13z" /><path d="M1.500 2.500h13M4 5v4M3 5.500h2M3 8.500h8" /></svg>${caret}</button>
          <span class="sep"></span>
          <button class="tool" aria-label="Market watch"><svg width="17" height="17" viewBox="0 0 17 17"><path d="M.5 1.500h15v14h-15z" fill="#fff" stroke="#5a90c8" /><path d="M5.500 3.500l3 3.500h-1.500v3h-3v-3h-1.500z" fill="#50c050" stroke="#108020" /><path d="M10.500 14l-3-3.500h1.500v-3h3v3h1.500z" fill="#f08050" stroke="#c04018" /></svg></button>
          <button class="tool" aria-label="Crosshair"><svg width="16" height="16" viewBox="0 0 16 16" fill="none" stroke="#555" stroke-width="1.300"><circle cx="8" cy="8" r="5" /><path d="M8 0v6.500M8 9.500v6.500M0 8h6.500M9.500 8h6.500" /></svg></button>
          <button class="tool" aria-label="Navigator"><svg width="18" height="17" viewBox="0 0 18 17"><path d="M.5 2.500v-1h4l1 1h6v6h-11z" fill="#ffe890" stroke="#c8a030" /><path d="M4.500 10v6" stroke="#555" stroke-dasharray="1 1" /><path d="M12 5l1.800 3.800l4.200.5l-3.200 2.800l.9 4.200l-3.700-2l-3.700 2l.9-4.200l-3.200-2.800l4.200-.5z" fill="#ffcc40" stroke="#c08820" /></svg></button>
          <button class="tool down" aria-label="Terminal"><svg width="16" height="14" viewBox="0 0 16 14"><path d="M.5 .5h15v13h-15z" fill="#fff" stroke="#1c5aa0" /><path d="M1 1h3v12h-3z" fill="#3b78c8" /><path d="M7 3.500h7M7 6.500h7M7 9.500h7" stroke="#c8d8ec" /><path d="M5.500 2v10" stroke="#904040" stroke-dasharray="1 2" /></svg></button>
          <button class="tool" aria-label="Strategy tester"><svg width="18" height="17" viewBox="0 0 18 17"><path d="M.5 .5h12v12h-12z" fill="#fff" stroke="#a0a0a0" /><path d="M3 2v8M5 4v7M9 2v6" stroke="#888" /><circle cx="9" cy="8" r="4.500" fill="#b8dcf8" fill-opacity=".8" stroke="#3b78b8" /><path d="M12.500 11.500l4.500 4.500" stroke="#d09830" stroke-width="2.500" /></svg></button>
          <span class="sep"></span>
          <button class="order"><svg width="17" height="17" viewBox="0 0 17 17"><path d="M1.500 .5h8l2 2v11h-10z" fill="#fff" stroke="#777" /><path d="M3 4.500h6M3 6.500h6M3 8.500h4" stroke="#777" />${plus(5.5, 5.5)}</svg>New Order</button>
        </div>
        <div class="group end">
          <span class="sep"></span>
          <button class="drop" aria-label="Indicators"><svg width="18" height="17" viewBox="0 0 18 17"><path d="M1.500 .5h8l2 2v11h-10z" fill="#fff" stroke="#777" /><path d="M7 3q-2-1-2 2v6M3.500 6h3" stroke="#555" fill="none" />${plus(6.5, 5.5)}</svg>${caret}</button>
          <button class="drop" aria-label="Periods"><svg width="17" height="17" viewBox="0 0 17 17"><circle cx="8.500" cy="8.500" r="6.800" fill="#eef6ff" stroke="#1c6cc8" stroke-width="2.800" /><path d="M8.500 4.500v4h3" stroke="#333" fill="none" /></svg>${caret}</button>
          <button class="drop" aria-label="Templates"><svg width="17" height="15" viewBox="0 0 17 15"><path d="M.5 .5h16v13h-16z" fill="#fff" stroke="#2c68a8" /><path d="M1 1h15v3h-15z" fill="#4a90d8" /><path d="M3 7.500l3-1l3 1l4-1.500" stroke="#b03020" fill="none" /><path d="M3 11l3-1l3 1.500l4-1" stroke="#209040" fill="none" /></svg>${caret}</button>
          <span class="sep"></span><span class="grip"></span>
          ${PERIODS.map((p) => html`<button class=${classMap({ period: true, down: p === "H1" })}>${p}</button>`)}
          <span class="sep"></span>
          <div class="ends">
            <button aria-label="Search"><svg width="15" height="15" viewBox="0 0 15 15" fill="none"><circle cx="9.500" cy="5.500" r="4" stroke="#3868d0" stroke-width="1.500" /><path d="M6.500 8.500l-5 5" stroke="#3868d0" stroke-width="2.500" /></svg></button>
            <button aria-label="Community"><svg width="21" height="15" viewBox="0 0 21 15" fill="#f4f4f4" stroke="#999"><path d="M12 1h4q4 0 4 4t-3 4v3l-3-3h-2q-4 0-4-4t4-4z" /><path d="M6 5h3q4 0 4 3.500t-4 3.500h-3l-2.500 2.500v-3q-3-1-2.500-3.500t5-3z" /></svg></button>
          </div>
        </div>
      </div>
      <price-chart></price-chart>
      <nav class="sheets">
        ${SYMBOLS.map((s, i) => html`<button class=${classMap({ on: i === 2, short: i === 0, mid: i === 5 || i === 9 })}>${s}</button>`)}
        <svg class="scroll" width="22" height="8" viewBox="0 0 22 8"><path d="M4 0v8l-4-4z" fill="#888" /><path d="M18 0v8l4-4z" fill="#000" /></svg>
      </nav>
      <trade-terminal></trade-terminal>
      <footer class="status">
        <div class="help">For Help, press F1</div>
        <div class="w1">Default</div><div class="w2">2021.10.28 07:00</div>
        <div class="w3">O: 0.75098</div><div class="w3">H: 0.75134</div><div class="w4">L: 0.75063</div><div class="w3">C: 0.75094</div><div class="w4">V: 4743</div>
        <div class="w5"><svg width="24" height="13" viewBox="0 0 24 13"><path d="M1 0v6M4 0v6M7 0v5M10 0v5M13 0v4M16 0v4M19 0v3M22 0v2" stroke="#6b9020" stroke-width="2" /><path d="M1 8v5M4 8v5M7 7v6M10 7v6M13 6v7M16 5v8M19 4v9M22 3v10" stroke="#205878" stroke-width="2" /></svg>1060/9 kb</div>
      </footer>
      <task-bar></task-bar>
      <expert-dialog class="dialog"></expert-dialog>
      <svg class="ink" width="1366" height="768" viewBox="0 0 1366 768" fill="none" stroke-linejoin="round" stroke-linecap="round">
        <g stroke="#f05560" stroke-opacity=".55" stroke-width="3">
          <path d="M508 193V170L515 164L532 159L545 158L556 163L560 169" />
          <path d="M511 204L517 208M524 211H565L595 202L615 192L616 182" />
          <path d="M301 371V388L308 397L322 402L345 405L425 406L445 408H543M558 408L575 405L589 402L590 380L585 373L575 370H334" />
          <path d="M1180 338H1222" stroke-width="4" /><path d="M1205 338L1225 337L1238 333L1250 332" />
          <path d="M1338 391L1322 392L1313 398L1308 415L1311 430L1325 443L1345 452L1357 448L1366 432M1364 398l2 3" />
          <path d="M343 501L372 504M343 502L395 516M345 510L400 518" />
          <path d="M330 521H400M326 518L398 519" stroke-width="5" /><path d="M320 523H424M330 526L392 526" />
          <path d="M440 508L425 510L416 515L413 525L418 535L450 534L470 528L483 518L489 510L484 502L475 499L456 501" />
        </g>
        <path d="M440 503H402L397 510L408 529L423 542L440 547L463 543L485 534L494 526" stroke="#283038" stroke-opacity=".6" stroke-width="3" />
      </svg>`;
  }
}
